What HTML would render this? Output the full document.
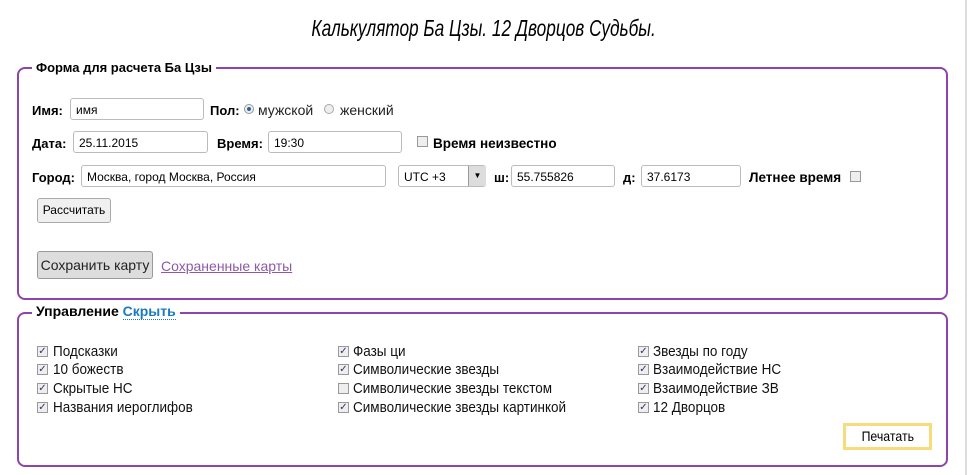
<!DOCTYPE html>
<html><head><meta charset="utf-8"><style>
body{margin:0;width:968px;height:475px;background:#fff;position:relative;overflow:hidden;font-family:"Liberation Sans","DejaVu Sans",sans-serif;font-size:13px;color:#000}
.a{position:absolute;white-space:nowrap}
.box{position:absolute;border:2px solid #8e44ad;border-radius:8px}
.leg{position:absolute;background:#fff;padding:0 4px;font-weight:bold;font-size:13px}
.inp{position:absolute;border:1px solid #bbb;border-radius:3px;height:22px;box-sizing:border-box;font-size:12px;padding:4px 0 0 5px;background:#fff}
.b{font-weight:bold}
.cb{position:absolute;width:11px;height:11px;border:1px solid #999;box-sizing:border-box;background:#eee;font-size:10px;line-height:9px;text-align:center;color:#336}
.cl{position:absolute;white-space:nowrap;font-size:15px;transform:scaleX(.9);transform-origin:left;color:#111}
</style></head><body>
<div class="a" style="left:0;width:968px;top:15px;text-align:center;font-size:23px;font-style:italic"><span style="display:inline-block;transform:scaleX(.75)">Калькулятор Ба Цзы. 12 Дворцов Судьбы.</span></div>
<div style="position:absolute;left:965px;top:0;width:2px;height:475px;background:#ddd"></div>

<div class="box" style="left:17px;top:67px;width:927px;height:229px"></div>
<div class="leg" style="left:32px;top:60px">Форма для расчета Ба Цзы</div>

<div class="a b" style="left:32px;top:103px">Имя:</div>
<div class="inp" style="left:70px;top:98px;width:134px">имя</div>
<div class="a b" style="left:210px;top:103px">Пол:</div>
<div class="a" style="left:244px;top:104px;width:10px;height:10px;border-radius:50%;border:1px solid #999;box-sizing:border-box;background:radial-gradient(#1f5f9f 30%,#eee 40%)"></div>
<div class="a" style="left:258px;top:102px;color:#222;font-size:14px">мужской</div>
<div class="a" style="left:324px;top:104px;width:10px;height:10px;border-radius:50%;border:1px solid #aaa;box-sizing:border-box;background:#eee"></div>
<div class="a" style="left:340px;top:102px;color:#222;font-size:14px">женский</div>

<div class="a b" style="left:32px;top:136px">Дата:</div>
<div class="inp" style="left:73px;top:131px;width:135px">25.11.2015</div>
<div class="a b" style="left:217px;top:136px">Время:</div>
<div class="inp" style="left:268px;top:131px;width:134px">19:30</div>
<div class="cb" style="left:417px;top:136px"></div>
<div class="a b" style="left:433px;top:136px;font-size:13.5px">Время неизвестно</div>

<div class="a b" style="left:32px;top:170px">Город:</div>
<div class="inp" style="left:81px;top:165px;width:305px">Москва, город Москва, Россия</div>
<div class="inp" style="left:398px;top:165px;width:88px">UTC +3</div>
<div class="a" style="left:468px;top:166px;width:17px;height:20px;background:#ddd;border-left:1px solid #999;font-size:8px;text-align:center;line-height:20px">▼</div>
<div class="a b" style="left:494px;top:170px">ш:</div>
<div class="inp" style="left:511px;top:165px;width:104px">55.755826</div>
<div class="a b" style="left:623px;top:170px">д:</div>
<div class="inp" style="left:641px;top:165px;width:100px">37.6173</div>
<div class="a b" style="left:749px;top:170px;font-size:13.5px">Летнее время</div>
<div class="cb" style="left:850px;top:171px"></div>

<div class="a" style="left:37px;top:198px;width:74px;height:25px;box-sizing:border-box;border:1px solid #aaa;border-radius:3px;background:#f0f0f0;font-size:12px;text-align:center;line-height:23px">Рассчитать</div>
<div class="a" style="left:37px;top:251px;width:116px;height:28px;box-sizing:border-box;border:1px solid #999;border-radius:3px;background:#ddd;font-size:14px;text-align:center;line-height:26px;color:#222">Сохранить карту</div>
<div class="a" style="left:161px;top:258px;font-size:14px;color:#8e5aa8;text-decoration:underline">Сохраненные карты</div>

<div class="box" style="left:17px;top:312px;width:927px;height:151px"></div>
<div class="leg" style="left:32px;top:303px;font-size:14px">Управление <span style="color:#1a7ac0;border-bottom:1px dotted #1a7ac0">Скрыть</span></div>

<div class="cb" style="left:37px;top:346px">✓</div><div class="cl" style="left:53px;top:343px">Подсказки</div>
<div class="cb" style="left:37px;top:364px">✓</div><div class="cl" style="left:53px;top:361px">10 божеств</div>
<div class="cb" style="left:37px;top:383px">✓</div><div class="cl" style="left:53px;top:380px">Скрытые НС</div>
<div class="cb" style="left:37px;top:402px">✓</div><div class="cl" style="left:53px;top:399px">Названия иероглифов</div>

<div class="cb" style="left:338px;top:346px">✓</div><div class="cl" style="left:353px;top:343px">Фазы ци</div>
<div class="cb" style="left:338px;top:364px">✓</div><div class="cl" style="left:353px;top:361px">Символические звезды</div>
<div class="cb" style="left:338px;top:383px"></div><div class="cl" style="left:353px;top:380px">Символические звезды текстом</div>
<div class="cb" style="left:338px;top:402px">✓</div><div class="cl" style="left:353px;top:399px">Символические звезды картинкой</div>

<div class="cb" style="left:638px;top:346px">✓</div><div class="cl" style="left:653px;top:343px">Звезды по году</div>
<div class="cb" style="left:638px;top:364px">✓</div><div class="cl" style="left:653px;top:361px">Взаимодействие НС</div>
<div class="cb" style="left:638px;top:383px">✓</div><div class="cl" style="left:653px;top:380px">Взаимодействие ЗВ</div>
<div class="cb" style="left:638px;top:402px">✓</div><div class="cl" style="left:653px;top:399px">12 Дворцов</div>

<div class="a" style="left:843px;top:423px;width:89px;height:27px;box-sizing:border-box;border:3px solid #f8dc7a;background:#fff;text-align:center;line-height:21px;font-size:14px"><span style="display:inline-block;transform:scaleX(.88)">Печатать</span></div>
</body></html>
